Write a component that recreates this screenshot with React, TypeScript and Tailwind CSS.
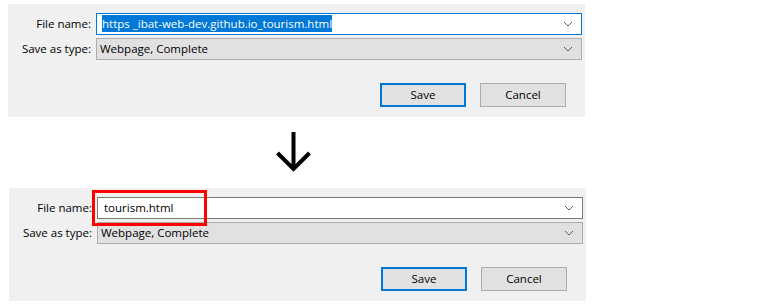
const Chevron = () => (
  <svg width="10" height="6" viewBox="0 0 10 6" className="shrink-0">
    <path d="M1 1 L5 5 L9 1" fill="none" stroke="#606060" strokeWidth="1" />
  </svg>
);

const SaveDialog = ({ after }: { after?: boolean }) => {
  return (
    <div className="w-[577px] h-[113px] bg-[#f0f0f0] pt-[9px] text-[11.5px] text-black">
      <div className="grid grid-cols-[83px_486px] gap-x-[5px] gap-y-[3px] items-center">
        <div className="text-right leading-[22px]">File name:</div>
        <div className="relative">
          <div
            className={
              after
                ? "h-[22px] border border-[#7a7a7a] bg-white flex items-center pl-[6px] pr-[8px]"
                : "h-[22px] border border-[#0078d7] bg-white flex items-center pl-[5px] pr-[8px]"
            }
          >
            <div className="flex-1 leading-[16px]">
              {after ? (
                <span>tourism.html</span>
              ) : (
                <span className="bg-[#0078d7] text-white py-[1px]">https _ibat-web-dev.github.io_tourism.html</span>
              )}
            </div>
            <Chevron />
          </div>
          {after && (
            <div className="absolute left-[-5px] top-[-7px] w-[115px] h-[36px] border-[3px] border-[#ff0000]" />
          )}
        </div>
        <div className="text-right leading-[22px]">Save as type:</div>
        <div className="h-[22px] border border-[#adadad] bg-[#e1e1e1] flex items-center pl-[3px] pr-[8px]">
          <div className="flex-1">Webpage, Complete</div>
          <Chevron />
        </div>
      </div>
      <div className="flex justify-end gap-[14px] pr-[19px] mt-[23px]">
        <button className="w-[86px] h-[24px] border-2 border-[#0078d7] bg-[#e1e1e1] text-[11.5px]">Save</button>
        <button className="w-[86px] h-[24px] border border-[#adadad] bg-[#e1e1e1] text-[11.5px]">Cancel</button>
      </div>
    </div>
  );
};

export default function App() {
  return (
    <div className="w-[760px] h-[307px] bg-white pt-[4px] font-['Open_Sans','Noto_Sans',sans-serif]">
      <div className="pl-[8px]">
        <SaveDialog />
      </div>
      <div className="h-[71px] pl-[275px] pt-[15px]">
        <svg width="37" height="41" viewBox="0 0 37 41">
          <path d="M18.5 0 V37" stroke="black" strokeWidth="4" fill="none" />
          <path d="M2.5 21 L18.5 37 L34.5 21" stroke="black" strokeWidth="4" fill="none" />
        </svg>
      </div>
      <div className="pl-[9px]">
        <SaveDialog after />
      </div>
    </div>
  );
}
